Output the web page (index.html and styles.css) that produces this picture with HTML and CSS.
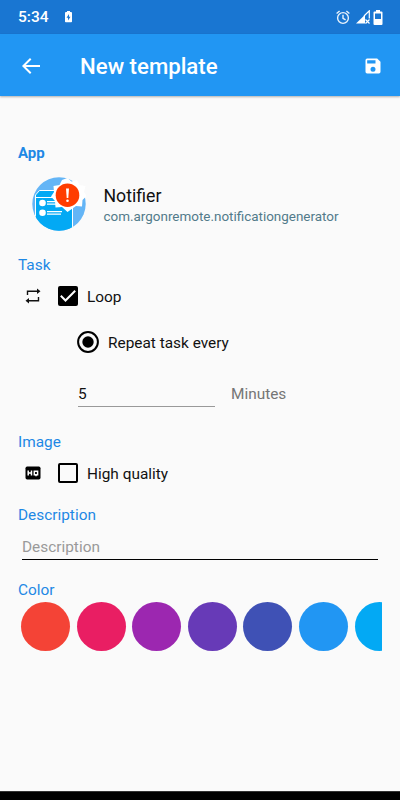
FILE: index.html
```html
<!DOCTYPE html>
<html lang="en">
<head>
<meta charset="utf-8">
<title>New template</title>
<link rel="stylesheet" href="styles.css">
</head>
<body>
<div class="screen">
  <header class="status">
    <span class="time">5:34</span>
    <svg class="charge" width="7" height="12" viewBox="0 0 7 12"><path fill="#fff" fill-rule="evenodd" d="M2 0h3v1h1a1 1 0 0 1 1 1v8.500a.8.8 0 0 1-.8.800H.8a.8.8 0 0 1-.8-.8V2a1 1 0 0 1 1-1h1zM4 3 1.500 6.700H3V9.500L5.500 5.700H4z"/></svg>
    <svg class="alarm" width="14" height="15" viewBox="0 0 14 15" fill="none" stroke="#e9f2fb" stroke-width="1.400"><circle cx="7" cy="8" r="5.400"/><path d="M7 4.700v3.600l2.600 1.600M.6 3.500 3.600 1M13.400 3.500 10.400 1"/></svg>
    <svg class="signal" width="15" height="14" viewBox="0 0 15 14"><path fill="#fff" d="M0 13.500 9 4.800v8.700z"/><path fill="none" stroke="#fff" stroke-width="1.200" d="M8 6 13.300.8V8.500M9.500 9.500l4 4M13.500 9.500l-4 4"/></svg>
    <svg class="battery" width="10" height="15" viewBox="0 0 10 15"><path fill="#fff" fill-rule="evenodd" d="M3 0h4v1.500h1.500a1 1 0 0 1 1 1V14a1 1 0 0 1-1 1h-7a1 1 0 0 1-1-1V2.500a1 1 0 0 1 1-1H3zM2 3.500v5.500h6V3.500z"/></svg>
  </header>
  <div class="appbar">
    <svg class="back" width="24" height="24" viewBox="0 0 24 24"><path fill="#fff" d="M21 11H6.830l5.590-5.590L11 4l-8 8 8 8 1.410-1.410L6.830 13H21z"/></svg>
    <h1>New template</h1>
    <svg class="save" width="20" height="20" viewBox="0 0 24 24"><path fill="#fff" d="M17 3H5a2 2 0 0 0-2 2v14a2 2 0 0 0 2 2h14a2 2 0 0 0 2-2V7zm-5 16a3 3 0 1 1 0-6 3 3 0 0 1 0 6zm3-10H5V5h10z"/></svg>
  </div>
  <main>
    <h2 class="strong">App</h2>
    <div class="app">
      <svg width="54" height="54" viewBox="0 0 54 54">
        <defs><clipPath id="disc"><circle cx="27" cy="27" r="26.700"/></clipPath></defs>
        <g clip-path="url(#disc)">
          <path fill="#64b5f6" d="M0 0h54v54H0z"/>
          <path fill="#03a9f4" d="M3 18l4-4h33v40H3z"/>
          <path fill="none" stroke="#fff" stroke-width="1" d="M3.500 54V18l4-4.500H26M3.500 20.500H22M40.500 31v23"/>
          <g fill="#fff"><circle cx="10.500" cy="26" r="3.300"/><circle cx="10.500" cy="35.700" r="3.300"/><path d="M15 24h10v1.200H15zM15 26.500h11v1.200H15zM15 34h15v1.200H15zM15 36.500h14v1.200H15z"/></g>
        </g>
        <path fill="#fff" d="M35.500 1l4 3.500 5.500-1.500 2.500 5 6 1-1.500 6 2.500 4-4 4-.5 6.500-6-.5L35.500 35l-5.500-5-6.500.5-.5-6.500-4-4.500 3-4.500-.5-6 6-1 2.500-5z"/>
        <circle cx="35.500" cy="18.200" r="11.800" fill="#ff3d00"/>
        <path fill="#fff" d="M34 11.500h3L36.300 21h-1.600z"/><circle cx="35.500" cy="23.800" r="1.300" fill="#fff"/>
      </svg>
      <div class="app-text"><div class="name">Notifier</div><div class="package">com.argonremote.notificationgenerator</div></div>
    </div>
    <h2 class="task">Task</h2>
    <div class="row">
      <svg class="lead" width="16" height="16" viewBox="0 0 16 16"><path fill="none" stroke="#111" stroke-width="1.400" d="M2.500 7V3.300H13M13.500 9v3.700H3"/><path fill="#111" d="M12 .5 15.500 3.300 12 6zM4 10 .5 12.700 4 15.500z"/></svg>
      <svg class="box" width="20" height="20" viewBox="0 0 20 20"><rect width="20" height="20" rx="2" fill="#000"/><path fill="none" stroke="#fff" stroke-width="2" d="M2.800 9.800 7.500 14.500 17.200 4.800"/></svg>
      <span>Loop</span>
    </div>
    <div class="row repeat">
      <svg width="22" height="22" viewBox="0 0 22 22"><circle cx="11" cy="11" r="9.900" fill="none" stroke="#000" stroke-width="2"/><circle cx="11" cy="11" r="5.700"/></svg>
      <span>Repeat task every</span>
    </div>
    <div class="interval"><div class="amount">5</div><span class="unit">Minutes</span></div>
    <h2 class="image">Image</h2>
    <div class="row">
      <svg class="lead" width="16" height="16" viewBox="0 0 16 16"><rect x=".5" y="1.500" width="15" height="13" rx="1.700"/><path fill="none" stroke="#fff" stroke-width="1.500" d="M3.200 5.500v5M6.500 5.500v5M3.200 8h3.300M9.300 6.200h3.300v3.600H9.300zM11 9.800v1.500"/></svg>
      <svg class="box" width="20" height="20" viewBox="0 0 20 20"><rect x="1" y="1" width="18" height="18" rx="1" fill="none" stroke="#000" stroke-width="2"/></svg>
      <span>High quality</span>
    </div>
    <h2 class="desc">Description</h2>
    <div class="field">Description</div>
    <h2 class="color">Color</h2>
    <div class="swatches"><i class="red"></i><i class="pink"></i><i class="purple"></i><i class="violet"></i><i class="indigo"></i><i class="blue"></i><i class="sky"></i></div>
  </main>
  <footer></footer>
</div>
</body>
</html>
```
FILE: styles.css
```css
* { box-sizing: border-box; }
body { margin: 0; font-family: Roboto, sans-serif; background: #fafafa; }
svg { display: block; flex: none; }
.screen { width: 400px; height: 800px; display: flex; flex-direction: column; overflow: hidden; color: #111; }
.status { height: 34px; flex: none; background: #1976d2; display: flex; align-items: center; padding: 0 17px 0 18px; }
.time { color: #fff; font-size: 15.500px; font-weight: 500; width: 47px; }
.alarm { margin-left: auto; margin-right: 6px; }
.signal { margin-right: 2px; }
.appbar { height: 62px; flex: none; background: #2196f3; display: flex; align-items: center; padding: 0 17px 0 19px; box-shadow: 0 1px 2px rgba(0, 0, 0, .3); }
h1 { margin: 2px 0 0 37px; color: #fff; font-size: 22.200px; line-height: 28px; font-weight: 500; }
.back { margin-top: 1px; }
.save { margin-left: auto; margin-top: 1px; }
main { flex: 1; padding: 46px 18px 0; display: flex; flex-direction: column; font-size: 15.400px; line-height: 20px; }
h2 { margin: 0; font-size: 15.400px; line-height: 22px; height: 20px; font-weight: 400; color: #1e88e5; }
h2.strong { font-weight: 700; font-size: 15px; }
.app { display: flex; margin-top: 14px; padding-left: 14px; height: 56px; align-items: center; }
.app-text { margin: 3px 0 0 17.500px; }
.name { font-size: 17.700px; line-height: 22px; }
.package { font-size: 13.450px; line-height: 20px; color: #527a8a; }
.task { margin-top: 22px; }
.row { display: flex; align-items: center; height: 28px; margin-top: 8px; padding-left: 7px; }
.row span { padding-top: 2px; }
.box { margin: 0 9px 0 17px; }
.repeat { margin-top: 18px; padding-left: 59px; }
.repeat span { margin-left: 9px; }
.interval { display: flex; margin: 28px 0 0 60px; height: 23px; }
.amount { width: 137px; border-bottom: 1px solid #999; }
.unit { margin-left: 16px; color: #757575; }
.image { margin-top: 24px; }
.desc { margin-top: 17px; }
.field { margin: 13px 4px 0; height: 23px; border-bottom: 1px solid #000; color: #999; }
.color { margin-top: 19px; }
.swatches { display: flex; gap: 6.600px; padding-left: 3px; margin-top: 3px; overflow: hidden; }
.swatches i { flex: none; width: 49px; height: 49px; border-radius: 50%; }
.red { background: #f44336; }
.pink { background: #e91e63; }
.purple { background: #9c27b0; }
.violet { background: #673ab7; }
.indigo { background: #3f51b5; }
.blue { background: #2196f3; }
.sky { background: #03a9f4; }
footer { height: 9px; flex: none; background: #000; border-top: 1px solid #333; }
```
